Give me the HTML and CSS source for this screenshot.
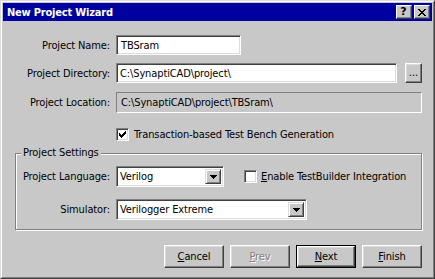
FILE: index.html
```html
<!DOCTYPE html>
<html>
<head>
<meta charset="utf-8">
<title>New Project Wizard</title>
<link rel="stylesheet" href="styles.css">
</head>
<body>
<div class="window">
  <div class="frame">
    <div class="titlebar">
      <span class="title">New Project Wizard</span>
      <div class="caption-btns">
        <span class="cbtn help">?</span>
        <span class="cbtn close"><svg width="8" height="7" viewBox="0 0 8 7" shape-rendering="crispEdges"><path d="M0 0h2v1h-2zM6 0h2v1h-2zM1 1h2v1h-2zM5 1h2v1h-2zM2 2h4v1h-4zM3 3h2v1h-2zM2 4h4v1h-4zM1 5h2v1h-2zM5 5h2v1h-2zM0 6h2v1h-2zM6 6h2v1h-2z" fill="#000"/></svg></span>
      </div>
    </div>
    <div class="content">
      <div class="row r-name">
        <span class="lbl">Project Name:</span>
        <div class="edit name-edit">TBSram</div>
      </div>
      <div class="row r-dir">
        <span class="lbl">Project Directory:</span>
        <div class="edit dir-edit">C:\SynaptiCAD\project\</div>
        <div class="btn browse">...</div>
      </div>
      <div class="row r-loc">
        <span class="lbl">Project Location:</span>
        <div class="static loc">C:\SynaptiCAD\project\TBSram\</div>
      </div>
      <div class="row r-check">
        <span class="check"><svg width="7" height="7" viewBox="0 0 7 7" shape-rendering="crispEdges"><path d="M0 2h1v3h-1zM1 3h1v3h-1zM2 4h1v3h-1zM3 3h1v3h-1zM4 2h1v3h-1zM5 1h1v3h-1zM6 0h1v3h-1z" fill="#000"/></svg></span>
        <span class="check-label">Transaction-based Test Bench Generation</span>
      </div>

      <div class="group">
        <span class="legend">Project Settings</span>
        <div class="row r-lang">
          <span class="lbl glbl">Project Language:</span>
          <div class="combo lang-combo">
            <span class="combo-text">Verilog</span>
            <span class="drop"><svg width="7" height="4" viewBox="0 0 7 4" shape-rendering="crispEdges"><path d="M0 0h7v1h-1v1h-1v1h-1v1h-1v-1h-1v-1h-1v-1h-1z" fill="#000"/></svg></span>
          </div>
          <span class="check empty"></span>
          <span class="check-label"><u>E</u>nable TestBuilder Integration</span>
        </div>
        <div class="row r-sim">
          <span class="lbl glbl">Simulator:</span>
          <div class="combo sim-combo">
            <span class="combo-text">Verilogger Extreme</span>
            <span class="drop"><svg width="7" height="4" viewBox="0 0 7 4" shape-rendering="crispEdges"><path d="M0 0h7v1h-1v1h-1v1h-1v1h-1v-1h-1v-1h-1v-1h-1z" fill="#000"/></svg></span>
          </div>
        </div>
      </div>

      <div class="buttons">
        <div class="btn push"><span><u>C</u>ancel</span></div>
        <div class="btn push disabled"><span><u>P</u>rev</span></div>
        <div class="default"><div class="btn push"><span><u>N</u>ext</span></div></div>
        <div class="btn push"><span><u>F</u>inish</span></div>
      </div>
    </div>
  </div>
</div>
</body>
</html>
```

FILE: styles.css
```css
* { box-sizing: border-box; }
html, body { margin: 0; padding: 0; }
body {
  width: 435px;
  height: 279px;
  overflow: hidden;
  background: #c8c8c8;
  font-family: "DejaVu Sans Condensed", "Liberation Sans", sans-serif;
  font-size: 11px;
  letter-spacing: -0.12px;
  color: #000;
}
u { text-decoration: underline; text-underline-offset: 1px; }

.window {
  width: 435px;
  height: 279px;
  border: 1px solid;
  border-color: #dcdcdc #404040 #404040 #dcdcdc;
  background: #c8c8c8;
}
.frame {
  height: 100%;
  border: 1px solid;
  border-color: #fff #808080 #808080 #fff;
  padding: 1px;
  display: flex;
  flex-direction: column;
}

.titlebar {
  height: 18px;
  background: #0000a0;
  display: flex;
  align-items: center;
  padding: 0 2px;
  flex-shrink: 0;
}
.title {
  color: #fff;
  font-weight: bold;
  padding-left: 2px;
  letter-spacing: -0.2px;
}
.caption-btns {
  margin-left: auto;
  display: flex;
  gap: 2px;
}
.cbtn {
  width: 16px;
  height: 14px;
  background: #c8c8c8;
  border: 1px solid;
  border-color: #fff #404040 #404040 #fff;
  box-shadow: inset -1px -1px 0 #808080;
  display: flex;
  align-items: center;
  justify-content: center;
}
.help {
  font-family: "DejaVu Sans", sans-serif;
  font-weight: bold;
  font-size: 11px;
  line-height: 12px;
  padding-right: 1px;
}
.close svg { margin-right: 1px; }

.content {
  flex: 1;
  display: flex;
  flex-direction: column;
}

.row {
  display: flex;
  align-items: center;
}
.lbl {
  width: 107px;
  margin-right: 6px;
  text-align: right;
  white-space: nowrap;
}
.glbl { width: 94px; }

.r-name { margin-top: 14px; }
.r-dir { margin-top: 8px; }
.r-loc { margin-top: 9px; }
.r-check { margin-top: 15px; padding-left: 113px; }

.edit {
  height: 20px;
  background: #fff;
  border: 1px solid;
  border-color: #808080 #fff #fff #808080;
  box-shadow: inset 1px 1px 0 #404040, inset -1px -1px 0 #dcdcdc;
  padding: 0 3px;
  display: flex;
  align-items: center;
  white-space: nowrap;
}
.name-edit { width: 125px; padding-left: 4px; }
.dir-edit { width: 281px; }

.btn {
  background: #c8c8c8;
  border: 1px solid;
  border-color: #fff #404040 #404040 #fff;
  box-shadow: inset -1px -1px 0 #808080, inset 1px 1px 0 #dcdcdc;
}
.browse {
  width: 17px;
  height: 20px;
  margin-left: 8px;
  display: flex;
  align-items: flex-end;
  justify-content: center;
  line-height: 12px;
  padding-bottom: 3px;
  letter-spacing: 0;
}

.static {
  height: 21px;
  border: 1px solid;
  border-color: #808080 #fff #fff #808080;
  padding: 0 4px;
  display: flex;
  align-items: center;
  white-space: nowrap;
}
.loc { width: 306px; }

.check {
  width: 13px;
  height: 13px;
  background: #fff;
  border: 1px solid;
  border-color: #808080 #fff #fff #808080;
  box-shadow: inset 1px 1px 0 #404040, inset -1px -1px 0 #dcdcdc;
  display: flex;
  align-items: center;
  justify-content: center;
  flex-shrink: 0;
}
.check-label {
  margin-left: 5px;
  white-space: nowrap;
}

.group {
  position: relative;
  margin-top: 12px;
  margin-left: 12px;
  width: 407px;
  height: 77px;
  border: 1px solid #808080;
  box-shadow: inset 1px 1px 0 #fff, 1px 1px 0 #fff;
  padding-top: 12px;
}
.legend {
  position: absolute;
  top: -8px;
  left: 5px;
  padding: 0 2px;
  background: #c8c8c8;
  white-space: nowrap;
}
.r-lang .check { margin-left: 20px; }
.r-lang .check-label { margin-left: 4px; }
.r-sim { margin-top: 12px; }

.combo {
  height: 21px;
  background: #fff;
  border: 1px solid;
  border-color: #808080 #fff #fff #808080;
  box-shadow: inset 1px 1px 0 #404040, inset -1px -1px 0 #dcdcdc;
  padding: 2px;
  display: flex;
  align-items: stretch;
}
.lang-combo { width: 108px; }
.sim-combo { width: 191px; }
.combo-text {
  flex: 1;
  padding-left: 1px;
  display: flex;
  align-items: center;
  white-space: nowrap;
  overflow: hidden;
}
.drop {
  width: 16px;
  background: #c8c8c8;
  border: 1px solid;
  border-color: #dcdcdc #404040 #404040 #dcdcdc;
  box-shadow: inset 1px 1px 0 #fff, inset -1px -1px 0 #808080;
  display: flex;
  align-items: center;
  justify-content: center;
}

.buttons {
  margin-top: 15px;
  display: flex;
  justify-content: flex-end;
  gap: 6px;
  padding-right: 10px;
}
.push {
  width: 60px;
  height: 23px;
  display: flex;
  align-items: center;
  justify-content: center;
}
.default {
  width: 60px;
  height: 23px;
  border: 1px solid #000;
}
.default .push {
  width: 58px;
  height: 21px;
}
.disabled span {
  color: #808080;
  text-shadow: 1px 1px 0 #fff;
}
```
